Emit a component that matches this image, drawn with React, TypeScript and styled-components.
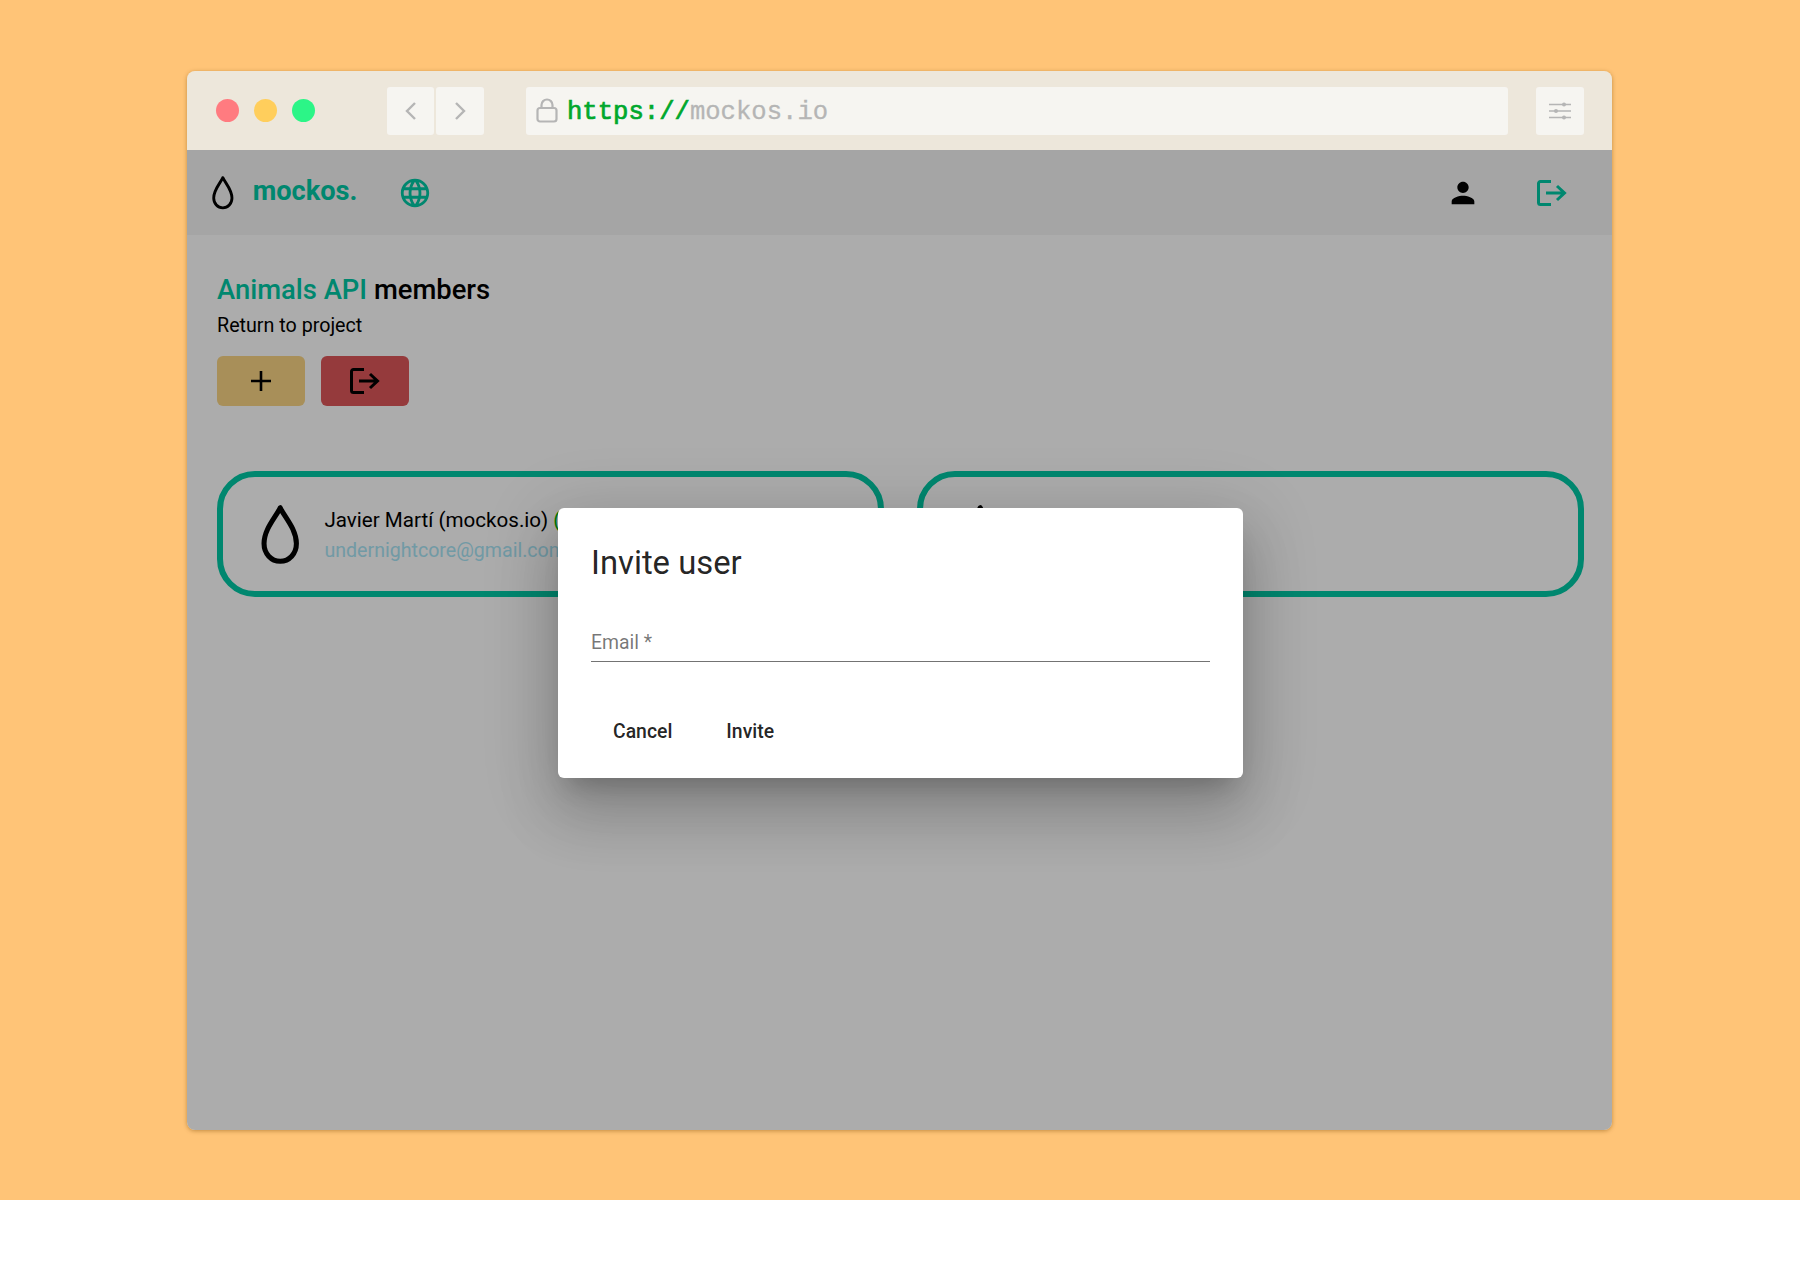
import React, { FC } from "react";
import styled, { createGlobalStyle } from "styled-components";

const GlobalStyle = createGlobalStyle`
  html, body {
    margin: 0;
    padding: 0;
    background: #fff;
  }
  * {
    box-sizing: border-box;
  }
`

const Backdrop = styled.div`
  height: 1200px;
  background: #ffc477;
  padding: 71px 188px 70px 187px;
`

const BrowserWindow = styled.div`
  height: 100%;
  display: flex;
  flex-direction: column;
  border-radius: 8px;
  box-shadow: 0 1px 4px rgba(120, 70, 0, 0.45);
  overflow: hidden;
`

const Toolbar = styled.div`
  flex: 0 0 79px;
  display: flex;
  align-items: center;
  background: #ede7db;
  padding: 0 28px 0 29px;
`

const Dots = styled.div`
  display: flex;
  gap: 15px;
  margin-right: 72px;
`

const Dot = styled.span<{ $color: string }>`
  width: 23px;
  height: 23px;
  border-radius: 50%;
  background: ${p => p.$color};
`

const NavButtons = styled.div`
  display: flex;
  gap: 2px;
  margin-right: 42px;
`

const ToolButton = styled.div<{ $width: number }>`
  width: ${p => p.$width}px;
  height: 48px;
  display: flex;
  align-items: center;
  justify-content: center;
  background: #f6f5f1;
  border-radius: 3px;
`

const AddressBar = styled.div`
  flex: 1;
  height: 48px;
  display: flex;
  align-items: center;
  gap: 9px;
  padding-left: 10px;
  margin-right: 28px;
  background: #f6f5f1;
  border-radius: 3px;
  font-family: "Liberation Mono", monospace;
  font-size: 25.6px;
  color: #b5b5b5;
`

const UrlText = styled.span`
  margin-top: 4px;
  -webkit-text-stroke: 0.3px #b5b5b5;
`

const Protocol = styled.span`
  color: #00a82d;
  -webkit-text-stroke: 0.7px #00a82d;
`

const AppArea = styled.div`
  flex: 1;
  position: relative;
  display: flex;
  flex-direction: column;
  background: #fff;
  font-family: Roboto, sans-serif;
`

const NavBar = styled.div`
  flex: 0 0 85px;
  display: flex;
  align-items: center;
  background: #f5f5f5;
  padding: 0 0 0 25px;
`

const Brand = styled.span`
  font-size: 27.2px;
  font-weight: 700;
  color: #00c8a5;
  margin: -4px 41px 0 19px;
`

const NavRight = styled.div`
  margin-left: auto;
  display: flex;
  align-items: center;
  gap: 57px;
  padding-right: 45px;
`

const Main = styled.main`
  padding: 37px 28px 0 30px;
`

const Heading = styled.h1`
  margin: 0;
  font-size: 27.4px;
  line-height: 36px;
  font-weight: 500;
  color: #000;
`

const Accent = styled.span`
  color: #00c8a5;
`

const ReturnLink = styled.div`
  margin-top: 4px;
  font-size: 19.7px;
  line-height: 28px;
  color: #000;
`

const Actions = styled.div`
  display: flex;
  gap: 16px;
  margin-top: 16px;
`

const ActionButton = styled.div<{ $color: string }>`
  width: 88px;
  height: 50px;
  display: flex;
  align-items: center;
  justify-content: center;
  border-radius: 6px;
  background: ${p => p.$color};
`

const Members = styled.div`
  display: grid;
  grid-template-columns: 1fr 1fr;
  gap: 33px;
  margin-top: 65px;
`

const MemberCard = styled.div`
  height: 126px;
  display: flex;
  align-items: center;
  gap: 25px;
  padding-left: 38px;
  border: 6px solid #00c8a5;
  border-radius: 38px;
`

const MemberName = styled.div`
  margin-top: 3px;
  font-size: 20.6px;
  line-height: 30px;
  color: #000;
`

const OwnerTag = styled.span`
  color: #00b300;
`

const MemberEmail = styled.div`
  margin-top: 1px;
  font-size: 19.6px;
  line-height: 30px;
  color: #a8e4f5;
`

const Overlay = styled.div`
  position: absolute;
  inset: 0;
  display: flex;
  justify-content: center;
  align-items: flex-start;
  padding: 358px 0 0 2px;
  background: rgba(0, 0, 0, 0.325);
`

const Dialog = styled.div`
  width: 685px;
  height: 270px;
  padding: 28px 33px 0;
  background: #fff;
  border-radius: 6px;
  color: rgba(0, 0, 0, 0.87);
  box-shadow: 0 17px 23px -11px rgba(0, 0, 0, 0.2),
    0 36px 58px 5px rgba(0, 0, 0, 0.14),
    0 14px 70px 12px rgba(0, 0, 0, 0.12);
`

const DialogTitle = styled.h2`
  margin: 0;
  font-size: 32.8px;
  line-height: 54px;
  font-weight: 400;
`

const Field = styled.div`
  margin-top: 36px;
  height: 36px;
  line-height: 34px;
  font-size: 19.4px;
  color: rgba(0, 0, 0, 0.54);
  border-bottom: 1.5px solid rgba(0, 0, 0, 0.55);
`

const DialogActions = styled.div`
  display: flex;
  gap: 54px;
  margin-top: 52px;
  padding-left: 22px;
`

const DialogButton = styled.span`
  font-size: 19.4px;
  line-height: 36px;
  font-weight: 500;
`

const DropIcon: FC<{ size: number }> = ({ size }) => (
  <svg width={size * 0.62} height={size} viewBox="0 0 38 60" fill="none" stroke="#000" strokeWidth="5" strokeLinejoin="round">
    <path d="M19 4C15 13 3 25 3 39.5 3 49.5 10 57 19 57s16-7.500 16-17.500C35 25 23 13 19 4Z" />
  </svg>
)

const ChevronIcon: FC<{ flip?: boolean }> = ({ flip }) => (
  <svg width="14" height="20" viewBox="0 0 14 20" fill="none" stroke="#b5b5b5" strokeWidth="2.4">
    <path d={flip ? "M3 2l8 8-8 8" : "M11 2l-8 8 8 8"} />
  </svg>
)

const LockIcon: FC = () => (
  <svg width="22" height="25" viewBox="0 0 22 25" fill="none" stroke="#b5b5b5" strokeWidth="2.2">
    <rect x="1.500" y="10" width="19" height="13.500" rx="2.500" />
    <path d="M5.500 10V7a5.500 5.500 0 0 1 11 0v3" />
  </svg>
)

const SlidersIcon: FC = () => (
  <svg width="22" height="18" viewBox="0 0 22 18" fill="none" stroke="#b5b5b5" strokeWidth="1.400">
    <path d="M0 2.500h22M0 9h22M0 15.500h22" />
    <g fill="#b5b5b5" stroke="none">
      <circle cx="15" cy="2.500" r="2" />
      <circle cx="7" cy="9" r="2" />
      <circle cx="15" cy="15.500" r="2" />
    </g>
  </svg>
)

const GlobeIcon: FC = () => (
  <svg width="34" height="34" viewBox="0 0 24 24" fill="#00c8a5">
    <path d="M11.990 2C6.470 2 2 6.480 2 12s4.470 10 9.990 10C17.520 22 22 17.520 22 12S17.520 2 11.990 2zm6.930 6h-2.950c-.32-1.250-.78-2.450-1.380-3.560 1.840.63 3.370 1.910 4.330 3.560zM12 4.040c.83 1.200 1.480 2.530 1.910 3.960h-3.820c.43-1.430 1.080-2.760 1.910-3.960zM4.260 14C4.100 13.360 4 12.690 4 12s.1-1.360.26-2h3.380c-.08.66-.14 1.320-.14 2 0 .68.06 1.340.14 2H4.260zm.82 2h2.950c.32 1.250.78 2.450 1.380 3.560-1.840-.63-3.370-1.900-4.330-3.560zm2.950-8H5.080c.96-1.660 2.490-2.930 4.330-3.560C8.810 5.550 8.350 6.750 8.030 8zM12 19.960c-.83-1.200-1.480-2.530-1.910-3.960h3.820c-.43 1.430-1.080 2.760-1.910 3.960zM14.340 14H9.660c-.09-.66-.16-1.320-.16-2 0-.68.07-1.350.16-2h4.680c.09.65.16 1.320.16 2 0 .68-.07 1.340-.16 2zm.25 5.560c.6-1.110 1.060-2.310 1.380-3.560h2.950c-.96 1.650-2.490 2.930-4.330 3.560zM16.360 14c.08-.66.14-1.320.14-2 0-.68-.06-1.340-.14-2h3.380c.16.64.26 1.310.26 2s-.1 1.360-.26 2h-3.380z" />
  </svg>
)

const PersonIcon: FC = () => (
  <svg width="34" height="34" viewBox="0 0 24 24" fill="#000">
    <path d="M12 12c2.210 0 4-1.790 4-4s-1.790-4-4-4-4 1.790-4 4 1.790 4 4 4zm0 2c-2.670 0-8 1.340-8 4v2h16v-2c0-2.660-5.330-4-8-4z" />
  </svg>
)

const ExitIcon: FC<{ color: string }> = ({ color }) => (
  <svg width="30" height="26" viewBox="0 0 30 26" fill="none" stroke={color} strokeWidth="3">
    <path d="M14 1.500H3.500a2 2 0 0 0-2 2v19a2 2 0 0 0 2 2H14" />
    <path d="M9 13h18M20 6l7.500 7-7.500 7" />
  </svg>
)

const PlusIcon: FC = () => (
  <svg width="20" height="20" viewBox="0 0 20 20" stroke="#000" strokeWidth="2.600">
    <path d="M10 0v20M0 10h20" />
  </svg>
)

const App: FC = () => {
    return (
        <>
            <GlobalStyle />
            <Backdrop>
                <BrowserWindow>
                    <Toolbar>
                        <Dots>
                            <Dot $color="#ff7b80" />
                            <Dot $color="#ffce5c" />
                            <Dot $color="#2cf587" />
                        </Dots>
                        <NavButtons>
                            <ToolButton $width={47}><ChevronIcon /></ToolButton>
                            <ToolButton $width={48}><ChevronIcon flip /></ToolButton>
                        </NavButtons>
                        <AddressBar>
                            <LockIcon />
                            <UrlText><Protocol>https://</Protocol>mockos.io</UrlText>
                        </AddressBar>
                        <ToolButton $width={48}><SlidersIcon /></ToolButton>
                    </Toolbar>
                    <AppArea>
                        <NavBar>
                            <DropIcon size={35} />
                            <Brand>mockos.</Brand>
                            <GlobeIcon />
                            <NavRight>
                                <PersonIcon />
                                <ExitIcon color="#00c8a5" />
                            </NavRight>
                        </NavBar>
                        <Main>
                            <Heading><Accent>Animals API</Accent> members</Heading>
                            <ReturnLink>Return to project</ReturnLink>
                            <Actions>
                                <ActionButton $color="#f9d584"><PlusIcon /></ActionButton>
                                <ActionButton $color="#dd5659"><ExitIcon color="#000" /></ActionButton>
                            </Actions>
                            <Members>
                                <MemberCard>
                                    <DropIcon size={62} />
                                    <div>
                                        <MemberName>Javier Martí (mockos.io) <OwnerTag>(owner)</OwnerTag></MemberName>
                                        <MemberEmail>undernightcore@gmail.com</MemberEmail>
                                    </div>
                                </MemberCard>
                                <MemberCard>
                                    <DropIcon size={62} />
                                </MemberCard>
                            </Members>
                        </Main>
                        <Overlay>
                            <Dialog>
                                <DialogTitle>Invite user</DialogTitle>
                                <Field>Email *</Field>
                                <DialogActions>
                                    <DialogButton>Cancel</DialogButton>
                                    <DialogButton>Invite</DialogButton>
                                </DialogActions>
                            </Dialog>
                        </Overlay>
                    </AppArea>
                </BrowserWindow>
            </Backdrop>
        </>
    )
}

export default App
